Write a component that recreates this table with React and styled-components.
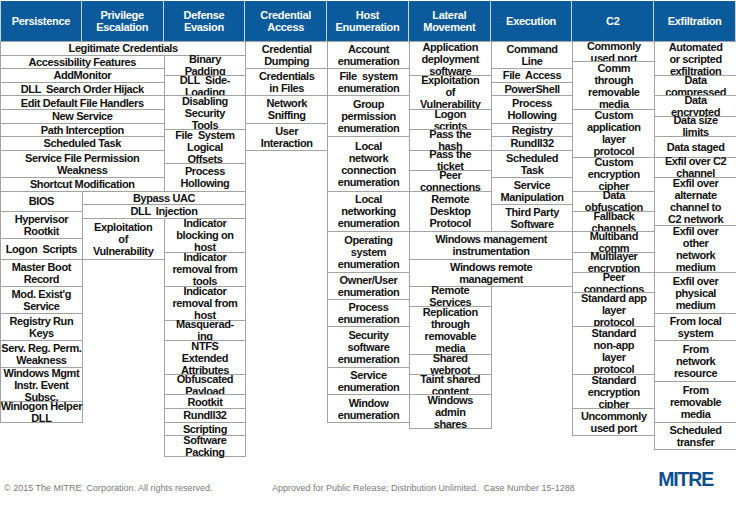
import React from "react";
import styled, { createGlobalStyle } from "styled-components";

const Global = createGlobalStyle`
  html, body { margin: 0; padding: 0; background: #ffffff; }
  body { font-family: "Liberation Sans", Arial, sans-serif; }
`;

const Page = styled.div`
  width: 736px;
  height: 510px;
  overflow: hidden;
  display: flex;
  flex-direction: column;
`;

const HeaderRow = styled.div`
  display: grid;
  grid-template-columns: repeat(9, 1fr);
  height: 41px;
  padding-top: 1px;
  box-sizing: border-box;
  background: #ffffff;
`;

const HeaderCell = styled.div`
  background: #0b5a9c;
  color: #ffffff;
  font-weight: bold;
  font-size: 11px;
  letter-spacing: -0.3px;
  line-height: 12px;
  white-space: pre;
  text-align: center;
  display: flex;
  align-items: center;
  justify-content: center;
  border-right: 1px solid #c9d3de;
  border-left: ${(p) => (p.$first ? "1px solid #c9d3de" : "0")};
`;

const Matrix = styled.div`
  display: grid;
  grid-template-columns: repeat(9, 1fr);
  grid-template-rows: repeat(61, 6.8px);
  width: 736px;
`;

const Cell = styled.div`
  grid-column: ${(p) => p.$c} / span ${(p) => p.$cs};
  grid-row: ${(p) => p.$r + 1} / ${(p) => p.$re + 1};
  margin: 0 -1px -1px 0;
  border: 1px solid #a3a3a3;
  background: #ffffff;
  color: #111111;
  font-weight: bold;
  font-size: 11px;
  letter-spacing: -0.4px;
  line-height: 12px;
  white-space: pre;
  text-align: center;
  display: flex;
  align-items: center;
  justify-content: center;
  min-height: 0;
  min-width: 0;
`;

const Footer = styled.div`
  display: flex;
  align-items: flex-start;
  padding: 0 23px 0 4px;
  flex: 1;
`;

const Note = styled.div`
  font-size: 9px;
  color: #7a7a7a;
  margin-top: 27px;
  white-space: pre;
  flex: ${(p) => (p.$fixed ? "0 0 268px" : "0 0 auto")};
`;

const Logo = styled.div`
  margin-left: auto;
  margin-top: 14px;
  font-family: "Liberation Sans", Arial, sans-serif;
  font-weight: 900;
  font-size: 19.5px;
  line-height: 1;
  letter-spacing: -1.2px;
  color: #114e8f;
`;

const headers = [
  "Persistence",
  "Privilege\nEscalation",
  "Defense\nEvasion",
  "Credential\nAccess",
  "Host\nEnumeration",
  "Lateral\nMovement",
  "Execution",
  "C2",
  "Exfiltration",
];

// [column, columnSpan, rowStart, rowEnd, text]
const cells = [
  [1, 3, 0, 2, "Legitimate Credentials"],
  [1, 2, 2, 4, "Accessibility Features"],
  [1, 2, 4, 6, "AddMonitor"],
  [1, 2, 6, 8, "DLL  Search Order Hijack"],
  [1, 2, 8, 10, "Edit Default File Handlers"],
  [1, 2, 10, 12, "New Service"],
  [1, 2, 12, 14, "Path Interception"],
  [1, 2, 14, 16, "Scheduled Task"],
  [1, 2, 16, 20, "Service File Permission\nWeakness"],
  [1, 2, 20, 22, "Shortcut Modification"],
  [1, 1, 22, 25, "BIOS"],
  [1, 1, 25, 29, "Hypervisor\nRootkit"],
  [1, 1, 29, 32, "Logon  Scripts"],
  [1, 1, 32, 36, "Master Boot\nRecord"],
  [1, 1, 36, 40, "Mod. Exist'g\nService"],
  [1, 1, 40, 44, "Registry Run\nKeys"],
  [1, 1, 44, 48, "Serv. Reg. Perm.\nWeakness"],
  [1, 1, 48, 53, "Windows Mgmt\nInstr. Event\nSubsc."],
  [1, 1, 53, 56, "Winlogon Helper\nDLL"],

  [3, 1, 2, 5, "Binary\nPadding"],
  [3, 1, 5, 8, "DLL  Side-\nLoading"],
  [3, 1, 8, 13, "Disabling\nSecurity\nTools"],
  [3, 1, 13, 18, "File  System\nLogical\nOffsets"],
  [3, 1, 18, 22, "Process\nHollowing"],
  [2, 2, 22, 24, "Bypass UAC"],
  [2, 2, 24, 26, "DLL  Injection"],
  [2, 1, 26, 32, "Exploitation\nof\nVulnerability"],
  [3, 1, 26, 31, "Indicator\nblocking on\nhost"],
  [3, 1, 31, 36, "Indicator\nremoval from\ntools"],
  [3, 1, 36, 41, "Indicator\nremoval from\nhost"],
  [3, 1, 41, 44, "Masquerad-\ning"],
  [3, 1, 44, 49, "NTFS\nExtended\nAttributes"],
  [3, 1, 49, 52, "Obfuscated\nPayload"],
  [3, 1, 52, 54, "Rootkit"],
  [3, 1, 54, 56, "Rundll32"],
  [3, 1, 56, 58, "Scripting"],
  [3, 1, 58, 61, "Software\nPacking"],

  [4, 1, 0, 4, "Credential\nDumping"],
  [4, 1, 4, 8, "Credentials\nin Files"],
  [4, 1, 8, 12, "Network\nSniffing"],
  [4, 1, 12, 16, "User\nInteraction"],

  [5, 1, 0, 4, "Account\nenumeration"],
  [5, 1, 4, 8, "File  system\nenumeration"],
  [5, 1, 8, 14, "Group\npermission\nenumeration"],
  [5, 1, 14, 22, "Local\nnetwork\nconnection\nenumeration"],
  [5, 1, 22, 28, "Local\nnetworking\nenumeration"],
  [5, 1, 28, 34, "Operating\nsystem\nenumeration"],
  [5, 1, 34, 38, "Owner/User\nenumeration"],
  [5, 1, 38, 42, "Process\nenumeration"],
  [5, 1, 42, 48, "Security\nsoftware\nenumeration"],
  [5, 1, 48, 52, "Service\nenumeration"],
  [5, 1, 52, 56, "Window\nenumeration"],

  [6, 1, 0, 5, "Application\ndeployment\nsoftware"],
  [6, 1, 5, 10, "Exploitation\nof\nVulnerability"],
  [6, 1, 10, 13, "Logon\nscripts"],
  [6, 1, 13, 16, "Pass the\nhash"],
  [6, 1, 16, 19, "Pass the\nticket"],
  [6, 1, 19, 22, "Peer\nconnections"],
  [6, 1, 22, 28, "Remote\nDesktop\nProtocol"],
  [6, 2, 28, 32, "Windows management\ninstrumentation"],
  [6, 2, 32, 36, "Windows remote\nmanagement"],
  [6, 1, 36, 39, "Remote\nServices"],
  [6, 1, 39, 46, "Replication\nthrough\nremovable\nmedia"],
  [6, 1, 46, 49, "Shared\nwebroot"],
  [6, 1, 49, 52, "Taint shared\ncontent"],
  [6, 1, 52, 57, "Windows\nadmin\nshares"],

  [7, 1, 0, 4, "Command\nLine"],
  [7, 1, 4, 6, "File  Access"],
  [7, 1, 6, 8, "PowerShell"],
  [7, 1, 8, 12, "Process\nHollowing"],
  [7, 1, 12, 14, "Registry"],
  [7, 1, 14, 16, "Rundll32"],
  [7, 1, 16, 20, "Scheduled\nTask"],
  [7, 1, 20, 24, "Service\nManipulation"],
  [7, 1, 24, 28, "Third Party\nSoftware"],

  [8, 1, 0, 3, "Commonly\nused port"],
  [8, 1, 3, 10, "Comm\nthrough\nremovable\nmedia"],
  [8, 1, 10, 17, "Custom\napplication\nlayer\nprotocol"],
  [8, 1, 17, 22, "Custom\nencryption\ncipher"],
  [8, 1, 22, 25, "Data\nobfuscation"],
  [8, 1, 25, 28, "Fallback\nchannels"],
  [8, 1, 28, 31, "Multiband\ncomm"],
  [8, 1, 31, 34, "Multilayer\nencryption"],
  [8, 1, 34, 37, "Peer\nconnections"],
  [8, 1, 37, 42, "Standard app\nlayer\nprotocol"],
  [8, 1, 42, 49, "Standard\nnon-app\nlayer\nprotocol"],
  [8, 1, 49, 54, "Standard\nencryption\ncipher"],
  [8, 1, 54, 58, "Uncommonly\nused port"],

  [9, 1, 0, 5, "Automated\nor scripted\nexfiltration"],
  [9, 1, 5, 8, "Data\ncompressed"],
  [9, 1, 8, 11, "Data\nencrypted"],
  [9, 1, 11, 14, "Data size\nlimits"],
  [9, 1, 14, 17, "Data staged"],
  [9, 1, 17, 20, "Exfil over C2\nchannel"],
  [9, 1, 20, 27, "Exfil over\nalternate\nchannel to\nC2 network"],
  [9, 1, 27, 34, "Exfil over\nother\nnetwork\nmedium"],
  [9, 1, 34, 40, "Exfil over\nphysical\nmedium"],
  [9, 1, 40, 44, "From local\nsystem"],
  [9, 1, 44, 50, "From\nnetwork\nresource"],
  [9, 1, 50, 56, "From\nremovable\nmedia"],
  [9, 1, 56, 60, "Scheduled\ntransfer"],
];

export default function App() {
  return (
    <>
      <Global />
      <Page>
        <HeaderRow>
          {headers.map((h, i) => (
            <HeaderCell key={h} $first={i === 0}>
              {h}
            </HeaderCell>
          ))}
        </HeaderRow>
        <Matrix>
          {cells.map(([c, cs, r, re, t], i) => (
            <Cell key={i} $c={c} $cs={cs} $r={r} $re={re}>
              {t}
            </Cell>
          ))}
        </Matrix>
        <Footer>
          <Note $fixed>© 2015 The MITRE  Corporation. All rights reserved.</Note>
          <Note>Approved for Public Release; Distribution Unlimited.  Case Number 15-1288</Note>
          <Logo>MITRE</Logo>
        </Footer>
      </Page>
    </>
  );
}
